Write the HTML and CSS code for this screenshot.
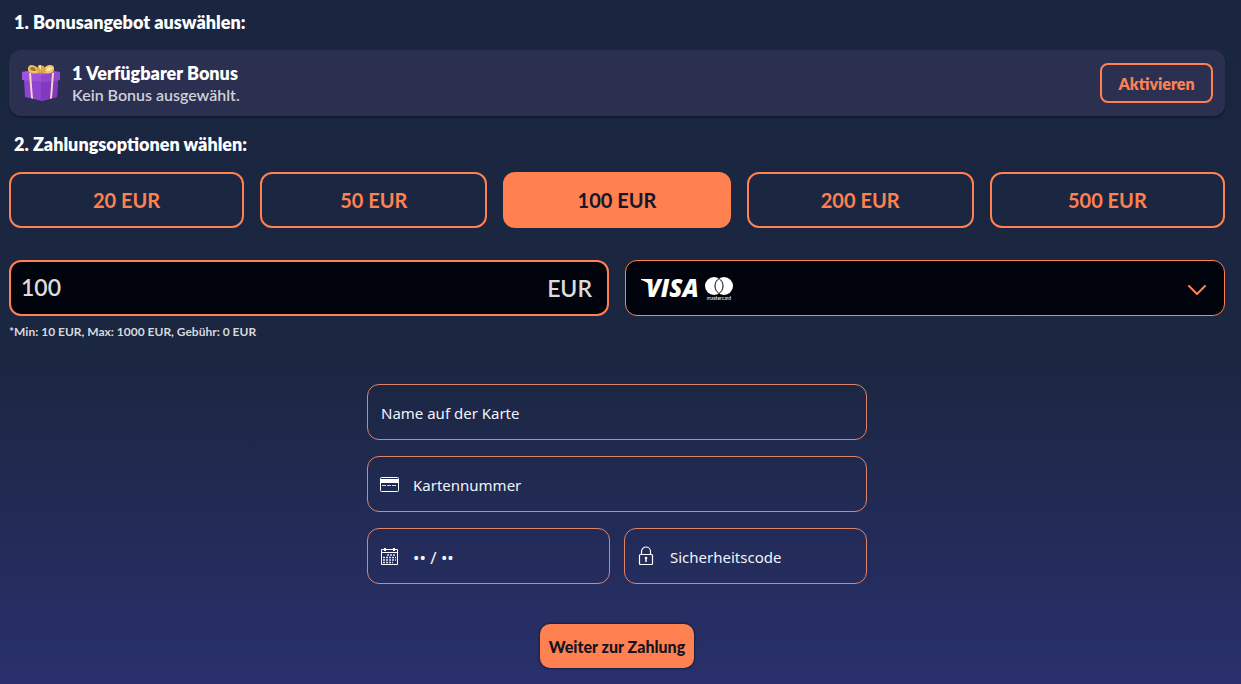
FILE: index.html
```html
<!DOCTYPE html>
<html lang="de">
<head>
  <meta charset="UTF-8">
  <meta name="viewport" content="width=device-width, initial-scale=1">
  <title>Einzahlung</title>
  <link rel="stylesheet" href="styles.css">
</head>
<body>

  <main class="deposit">
    <h2>1. Bonusangebot auswählen:</h2>

    <section class="bonus">
      <svg class="gift" viewBox="0 0 40 40" aria-hidden="true">
        <path d="M3 16 L20 19 L37 16 L36 34 L21 38 L4 34 Z" fill="#8f43cf"/>
        <path d="M20 18 L37 15 L36 34 L20 38 Z" fill="#8139c2"/>
        <path d="M1 9 L16 7 L39 9 L39 17 L20 19 L1 17 Z" fill="#a052d8"/>
        <path d="M1 9 L16 7 L39 9 L20 12 Z" fill="#a963dd"/>
        <path d="M20 12 L39 9 L39 17 L20 19 Z" fill="#8f47cc"/>
        <path d="M8 10 L10 10 L12 36 L10 35 Z" fill="#f3d6c4"/>
        <path d="M31 10 L33 10 L31 35 L29 36 Z" fill="#f3d6c4"/>
        <path d="M19 8 C15 1 8 0 7 5 C6 10 13 12 19 9 Z" fill="#f0c566"/>
        <path d="M21 8 C25 0 33 1 33 5 C34 10 27 12 21 9 Z" fill="#f0c566"/>
        <path d="M14 5 C11 3 9 4 9 6 C10 8 13 8 15 8 Z" fill="#a87428"/>
        <path d="M26 5 C29 3 31 4 31 6 C30 8 27 8 25 8 Z" fill="#fbe6a8"/>
        <path d="M18 2 L23 3 L25 9 L19 10 L15 7 Z" fill="#dfa840"/>
        <path d="M17 3 L20 2 L20 7 Z" fill="#fbe6a8"/>
      </svg>
      <div class="bonus-text">
        <strong>1 Verfügbarer Bonus</strong>
        <span>Kein Bonus ausgewählt.</span>
      </div>
      <button type="button" class="activate">Aktivieren</button>
    </section>

    <h2>2. Zahlungsoptionen wählen:</h2>

    <div class="amounts">
      <div class="amount-col"><button type="button" class="amount">20 EUR</button></div>
      <div class="amount-col"><button type="button" class="amount">50 EUR</button></div>
      <div class="amount-col"><button type="button" class="amount active">100 EUR</button></div>
      <div class="amount-col"><button type="button" class="amount">200 EUR</button></div>
      <div class="amount-col"><button type="button" class="amount">500 EUR</button></div>
    </div>

    <div class="payment-row">
      <div class="amount-box">
        <input type="text" id="amountInput" aria-label="Betrag" inputmode="numeric" value="100">
        <label for="amountInput">EUR</label>
      </div>
      <div class="method-box">
        <select id="method" class="method" aria-label="Zahlungsmethode">
          <option>VISA</option>
        </select>
        <svg class="visa-wing" viewBox="0 0 12 10" aria-hidden="true">
          <path d="M0 0 H8 L11 10 C9 5 5 2 0 1 Z" fill="#fff"/>
        </svg>
        <svg class="mastercard" viewBox="0 0 30 24" aria-hidden="true">
          <circle cx="10" cy="9" r="9" fill="#fff"/>
          <circle cx="20" cy="9" r="9" fill="#fff"/>
          <path d="M15 1.5 A9 9 0 0 1 15 16.5 A9 9 0 0 1 15 1.5 Z" fill="#fff" stroke="#02040d" stroke-width="1"/>
          <text x="15" y="23" text-anchor="middle">mastercard</text>
        </svg>
        <svg class="chevron" viewBox="0 0 18 10" aria-hidden="true">
          <path d="M1 1 L9 9 L17 1" fill="none" stroke="#ff8050" stroke-width="2" stroke-linecap="round" stroke-linejoin="round"/>
        </svg>
      </div>
    </div>
    <p class="limits">*Min: 10 EUR, Max: 1000 EUR, Gebühr: 0 EUR</p>

    <form class="card-form">
      <div class="field">
        <input type="text" aria-label="Name auf der Karte" placeholder="Name auf der Karte">
      </div>
      <div class="field">
        <svg class="icon" viewBox="0 0 20 20" aria-hidden="true">
          <rect x="0.5" y="3.5" width="18" height="14" rx="1" fill="none" stroke="#fff"/>
          <path d="M1 5 H18 V9 H1 Z" fill="#fff"/>
          <path d="M2 11.5 H17" stroke="#d5d8ee" stroke-dasharray="4 1"/>
        </svg>
        <input type="text" aria-label="Kartennummer" placeholder="Kartennummer">
      </div>
      <div class="field-row">
        <div class="field">
          <svg class="icon" viewBox="0 0 20 20" aria-hidden="true">
            <path d="M1.5 3.5 H17.5 V18.5 H1.5 Z M1.5 6.5 H17.5" fill="none" stroke="#fff"/>
            <path d="M5 2 V5 M14 2 V5" stroke="#fff" stroke-width="2"/>
            <path d="M7 9 H16 M3 11.5 H16 M3 14 H16 M3 16.5 H13" stroke="#dde0f2" stroke-width="1.5" stroke-dasharray="2 1"/>
          </svg>
          <input type="text" class="expiry" aria-label="Gültig bis" placeholder="•• / ••">
        </div>
        <div class="field">
          <svg class="icon" viewBox="0 0 20 20" aria-hidden="true">
            <rect x="2.5" y="8.5" width="13" height="10" rx="1" fill="none" stroke="#fff" stroke-width="1.2"/>
            <path d="M4.500 8 V5.5 A4.500 4.500 0 0 1 13.5 5.5 V8" fill="none" stroke="#fff" stroke-width="1.2"/>
            <path d="M9 12 V16" stroke="#fff" stroke-width="1.5"/>
            <circle cx="9" cy="12" r="1.3" fill="#fff"/>
          </svg>
          <input type="text" aria-label="Sicherheitscode" placeholder="Sicherheitscode">
        </div>
      </div>
      <button type="submit" class="submit">Weiter zur Zahlung</button>
    </form>
  </main>

</body>
</html>
```
FILE: styles.css
```css
* {
  box-sizing: border-box;
}

body {
  margin: 0;
  min-height: 100vh;
  font-family: Lato, sans-serif;
  color: #fff;
  background: linear-gradient(#1a263f 0%, #1b2640 52%, #29306c 100%);
}

.deposit {
  padding: 10px 16px 0 9px;
}

h2 {
  margin: 0 0 16px 5px;
  font-size: 18px;
  line-height: 24px;
  font-weight: 800;
}

button,
input,
select {
  font-family: inherit;
}

button {
  cursor: pointer;
}

/* bonus banner */
.bonus {
  display: flex;
  align-items: center;
  height: 66px;
  margin-bottom: 16px;
  padding: 0 12px;
  border-radius: 12px;
  background: #2b2f50;
  box-shadow: 0 2px 2px rgba(0, 0, 0, 0.3);
}

.gift {
  width: 40px;
  height: 40px;
  margin-right: 11px;
}

.bonus-text {
  flex: 1;
  display: flex;
  flex-direction: column;
}

.bonus-text strong {
  font-size: 18px;
  line-height: 24px;
  font-weight: 800;
}

.bonus-text span {
  font-size: 16px;
  line-height: 20px;
  font-weight: 600;
  color: #d0d1d8;
}

.activate {
  width: 113px;
  height: 40px;
  border: 2px solid #ff8050;
  border-radius: 8px;
  background: none;
  color: #ff8050;
  font-size: 16px;
  font-weight: 800;
}

/* amount presets */
.amounts {
  display: grid;
  grid-template-columns: repeat(5, 1fr);
  margin-bottom: 32px;
}

.amount-col {
  padding: 0 8px;
}

.amount-col:first-child {
  padding-left: 0;
}

.amount-col:last-child {
  padding-right: 0;
}

.amount {
  width: 100%;
  height: 56px;
  border: 2px solid #ff8050;
  border-radius: 12px;
  background: none;
  color: #ff8050;
  font-size: 20px;
  font-weight: 700;
}

.amount.active {
  background: #ff8050;
  color: #16162a;
}

/* amount + method */
.payment-row {
  display: grid;
  grid-template-columns: 1fr 1fr;
  gap: 16px;
}

.amount-box {
  display: flex;
  align-items: center;
  height: 56px;
  padding: 0 15px 0 10px;
  border: 2px solid #ff8050;
  border-radius: 12px;
  background: #02040d;
  color: #dcdcdc;
  font-size: 23px;
  font-weight: 600;
}

.amount-box input {
  flex: 1;
  min-width: 0;
  padding: 0 0 2px;
  border: 0;
  background: none;
  color: inherit;
  font-size: 23px;
  font-weight: 600;
}

.method-box {
  position: relative;
}

.method {
  width: 100%;
  height: 56px;
  padding: 0 16px 2px 20px;
  border: 1px solid #ff8050;
  border-radius: 12px;
  appearance: none;
  background: #02040d;
  color: #fff;
  font-family: "Open Sans", sans-serif;
  font-size: 24px;
  font-style: italic;
  font-weight: 800;
}

.visa-wing,
.mastercard,
.chevron {
  position: absolute;
  pointer-events: none;
}

.visa-wing {
  top: 19px;
  left: 16px;
  width: 12px;
  height: 10px;
}

.mastercard {
  top: 17px;
  left: 79px;
  width: 30px;
  height: 24px;
}

.mastercard text {
  fill: #fff;
  font-family: Lato, sans-serif;
  font-size: 5px;
}

.chevron {
  top: 25px;
  right: 19px;
  width: 18px;
  height: 10px;
}

.limits {
  margin: 8px 0 44px;
  font-size: 12px;
  line-height: 16px;
  font-weight: 700;
  color: #d8d9de;
}

/* card form */
.card-form {
  display: flex;
  flex-direction: column;
  gap: 16px;
  max-width: 500px;
  margin: 0 auto;
}

.field {
  flex: 1;
  display: flex;
  align-items: center;
  gap: 12px;
  min-width: 0;
  padding: 0 12px;
  border: 1px solid #e0836b;
  border-radius: 12px;
}

.field-row {
  display: flex;
  gap: 14px;
}

.icon {
  flex: none;
  width: 20px;
  height: 20px;
}

.field input {
  flex: 1;
  min-width: 0;
  height: 54px;
  padding: 2px 1px 0;
  border: 0;
  background: none;
  color: #fff;
  font-family: "Noto Sans", sans-serif;
  font-size: 15px;
}

.field .expiry {
  font-size: 17px;
}

.field input::placeholder {
  color: #f2f3fa;
  opacity: 1;
}

.submit {
  align-self: center;
  height: 44px;
  margin: 24px 0 16px;
  padding: 0 9px;
  border: 0;
  border-radius: 10px;
  background: #ff8050;
  box-shadow: 0 0 2px 1px rgba(20, 20, 40, 0.6);
  color: #15131f;
  font-size: 16px;
  font-weight: 900;
}
```
